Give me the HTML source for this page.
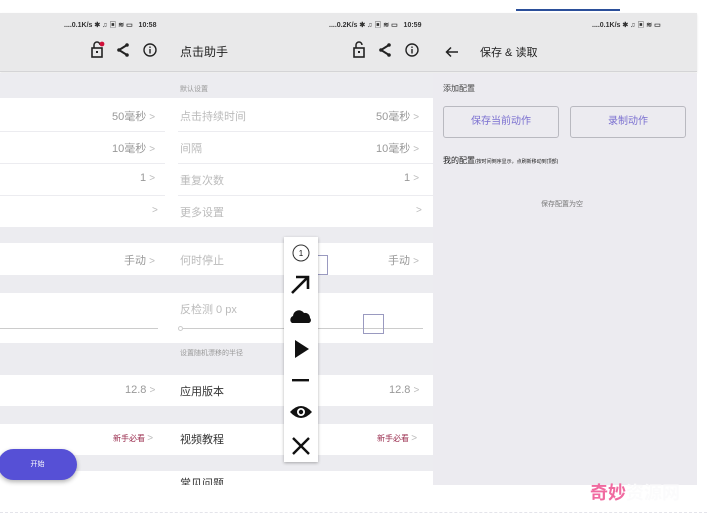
<!DOCTYPE html>
<html><head><meta charset="utf-8"><style>
*{margin:0;padding:0;box-sizing:border-box}
body{width:707px;height:519px;overflow:hidden;background:#fff;position:relative;font-family:"Liberation Sans","Noto Sans CJK SC",sans-serif;}
.a{position:absolute;white-space:nowrap}
.hdr{position:absolute;left:0;top:13px;width:697px;height:59px;background:#e9e9ea;border-bottom:1px solid #d4d4d6;box-shadow:0 1px 2px rgba(0,0,0,.1)}
.sb{font-size:7px;font-weight:bold;color:#333}
.t{font-size:11px;color:#bbb}
.v{font-size:11px;color:#999}
.line{position:absolute;height:1px;background:#ececf0}
.gray{position:absolute;background:#ececf0}
.chev{font-size:10px;color:#bbb}
</style></head><body>
<div class="a" style="left:516px;top:9px;width:104px;height:2px;background:#2b4f9a"></div>
<div class="hdr"></div>
<div class="a sb" style="left:64px;top:20px">....0.1K/s ✱ ♫ ▣ ≋ ▭ &nbsp; 10:58</div>
<div class="a sb" style="left:329px;top:20px">....0.2K/s ✱ ♫ ▣ ≋ ▭ &nbsp; 10:59</div>
<div class="a sb" style="left:592px;top:20px">....0.1K/s ✱ ♫ ▣ ≋ ▭</div>
<svg class="a" style="left:90px;top:41px" width="70" height="18" viewBox="0 0 70 18">
<rect x="2" y="7" width="10" height="9" fill="none" stroke="#222" stroke-width="1.6"/><path d="M4 7V4a3 3 0 0 1 6 0" fill="none" stroke="#222" stroke-width="1.5"/><rect x="6" y="10" width="2" height="2" fill="#222"/><circle cx="12" cy="3" r="2.4" fill="#d0103a"/>
<path d="M37 4L29 9L37 14" fill="none" stroke="#222" stroke-width="2"/><circle cx="37" cy="4" r="1.8" fill="#222"/><circle cx="29" cy="9" r="1.8" fill="#222"/><circle cx="37" cy="14" r="1.8" fill="#222"/>
<circle cx="60" cy="9" r="6" fill="none" stroke="#222" stroke-width="1.4"/><rect x="59.3" y="8" width="1.4" height="4.5" fill="#222"/><rect x="59.3" y="5.5" width="1.4" height="1.4" fill="#222"/>
</svg>
<div class="a" style="left:180px;top:43px;font-size:12px;color:#222">点击助手</div>
<svg class="a" style="left:352px;top:41px" width="70" height="18" viewBox="0 0 70 18">
<rect x="2" y="7" width="10" height="9" fill="none" stroke="#222" stroke-width="1.6"/><path d="M4 7V4a3 3 0 0 1 6 0" fill="none" stroke="#222" stroke-width="1.5"/><rect x="6" y="10" width="2" height="2" fill="#222"/>
<path d="M37 4L29 9L37 14" fill="none" stroke="#222" stroke-width="2"/><circle cx="37" cy="4" r="1.8" fill="#222"/><circle cx="29" cy="9" r="1.8" fill="#222"/><circle cx="37" cy="14" r="1.8" fill="#222"/>
<circle cx="60" cy="9" r="6" fill="none" stroke="#222" stroke-width="1.4"/><rect x="59.3" y="8" width="1.4" height="4.5" fill="#222"/><rect x="59.3" y="5.5" width="1.4" height="1.4" fill="#222"/>
</svg>
<svg class="a" style="left:445px;top:46px" width="14" height="12" viewBox="0 0 14 12"><path d="M13 6H2M6 1.5L1.5 6L6 10.5" fill="none" stroke="#222" stroke-width="1.5"/></svg>
<div class="a" style="left:480px;top:44px;font-size:11px;color:#222">保存 &amp; 读取</div>

<div class="gray" style="left:0;top:73px;width:433px;height:412px"></div>
<div class="gray" style="left:433px;top:73px;width:264px;height:412px;background:#ecebf0"></div>
<div class="a" style="left:0;top:98px;width:433px;height:129px;background:#fff"></div>
<div class="a" style="left:0;top:243px;width:433px;height:32px;background:#fff"></div>
<div class="a" style="left:0;top:293px;width:433px;height:50px;background:#fff"></div>
<div class="a" style="left:0;top:375px;width:433px;height:31px;background:#fff"></div>
<div class="a" style="left:0;top:424px;width:433px;height:31px;background:#fff"></div>
<div class="a" style="left:0;top:471px;width:433px;height:14px;background:#fff;overflow:hidden"><div class="a" style="left:180px;top:4px;font-size:11px;color:#333">常见问题</div></div>
<div class="line" style="left:0;top:131px;width:165px"></div><div class="line" style="left:178px;top:131px;width:255px"></div>
<div class="line" style="left:0;top:163px;width:165px"></div><div class="line" style="left:178px;top:163px;width:255px"></div>
<div class="line" style="left:0;top:195px;width:165px"></div><div class="line" style="left:178px;top:195px;width:255px"></div>
<div class="a" style="left:180px;top:84px;font-size:7px;color:#999">默认设置</div>
<div class="a v" style="left:112px;top:108px">50毫秒 <span class="chev">&gt;</span></div>
<div class="a t" style="left:180px;top:108px">点击持续时间</div>
<div class="a v" style="left:376px;top:108px">50毫秒 <span class="chev">&gt;</span></div>
<div class="a v" style="left:112px;top:140px">10毫秒 <span class="chev">&gt;</span></div>
<div class="a t" style="left:180px;top:140px">间隔</div>
<div class="a v" style="left:376px;top:140px">10毫秒 <span class="chev">&gt;</span></div>
<div class="a v" style="left:140px;top:172px">1 <span class="chev">&gt;</span></div>
<div class="a t" style="left:180px;top:172px">重复次数</div>
<div class="a v" style="left:404px;top:172px">1 <span class="chev">&gt;</span></div>
<div class="a chev" style="left:152px;top:205px">&gt;</div>
<div class="a t" style="left:180px;top:204px">更多设置</div>
<div class="a chev" style="left:416px;top:205px">&gt;</div>
<div class="a v" style="left:124px;top:252px">手动 <span class="chev">&gt;</span></div>
<div class="a t" style="left:180px;top:252px">何时停止</div>
<div class="a v" style="left:388px;top:252px">手动 <span class="chev">&gt;</span></div>
<div class="a t" style="left:180px;top:301px">反检测 0 px</div>
<div class="line" style="left:0;top:328px;width:158px;background:#ccc"></div>
<div class="line" style="left:183px;top:328px;width:240px;background:#ccc"></div>
<div class="a" style="left:178px;top:326px;width:5px;height:5px;border:1px solid #ccc;border-radius:50%;background:#fff"></div>
<div class="a" style="left:180px;top:348px;font-size:7px;color:#999">设置随机漂移的半径</div>
<div class="a v" style="left:125px;top:384px">12.8 <span class="chev">&gt;</span></div>
<div class="a" style="left:180px;top:383px;font-size:11px;color:#333">应用版本</div>
<div class="a v" style="left:389px;top:384px">12.8 <span class="chev">&gt;</span></div>
<div class="a" style="left:113px;top:433px;font-size:8px;color:#9a2c4e">新手必看 <span class="chev" style="font-size:10px">&gt;</span></div>
<div class="a" style="left:180px;top:431px;font-size:11px;color:#333">视频教程</div>
<div class="a" style="left:377px;top:433px;font-size:8px;color:#9a2c4e">新手必看 <span class="chev" style="font-size:10px">&gt;</span></div>
<div class="a" style="left:-2px;top:449px;width:79px;height:31px;border-radius:16px;background:#5650d6;box-shadow:0 2px 5px rgba(0,0,0,.3);color:#fff;font-size:7px;text-align:center;line-height:31px">开始</div>
<div class="a" style="left:307px;top:255px;width:21px;height:20px;border:1px solid #9a9ac0"></div>
<div class="a" style="left:363px;top:314px;width:21px;height:20px;border:1px solid #9a9ac0"></div>
<div class="a" style="left:284px;top:237px;width:34px;height:225px;background:#fff;box-shadow:0 1px 3px rgba(0,0,0,.3)"></div>
<svg class="a" style="left:284px;top:237px" width="34" height="225" viewBox="0 0 34 225">
<circle cx="17" cy="16" r="8" fill="#fff" stroke="#333" stroke-width="1"/><text x="17" y="19" font-size="8" text-anchor="middle" font-family="Liberation Sans" fill="#111">1</text>
<path d="M8 56L23 41M12 40H24V52" fill="none" stroke="#111" stroke-width="2.6"/>
<path d="M8 86a4 4 0 0 1 1-7a6 6 0 0 1 11-3a5 5 0 0 1 6 5a3 3 0 0 1-1 5z" fill="#111"/>
<path d="M11 103L25 112L11 121z" fill="#111"/>
<rect x="8" y="142" width="17" height="2.4" fill="#111"/>
<path d="M6 175q11-12 22 0q-11 12-22 0z" fill="#111"/><circle cx="17" cy="175" r="4" fill="#fff"/><circle cx="17" cy="175" r="2.2" fill="#111"/>
<path d="M9 201L25 217M25 201L9 217" stroke="#111" stroke-width="2.4"/>
</svg>
<div class="a" style="left:443px;top:83px;font-size:8px;color:#444">添加配置</div>
<div class="a" style="left:443px;top:106px;width:116px;height:32px;border:1px solid #b9b9c0;border-radius:3px;color:#7a6fd0;font-size:10px;text-align:center;line-height:30px">保存当前动作</div>
<div class="a" style="left:570px;top:106px;width:116px;height:32px;border:1px solid #b9b9c0;border-radius:3px;color:#7a6fd0;font-size:10px;text-align:center;line-height:30px">录制动作</div>
<div class="a" style="left:443px;top:155px;font-size:8px;color:#222">我的配置<span style="font-size:5px">(按时间倒序显示，点刷新移动到顶部)</span></div>
<div class="a" style="left:541px;top:199px;font-size:7px;color:#777">保存配置为空</div>
<div class="a" style="left:590px;top:479px;font-size:18px;color:#f06aa0;font-weight:bold">奇妙<span style="color:#fbfbfc">资源网</span></div>
<div class="a" style="left:0;top:512px;width:707px;border-top:1px dashed #e4e4ea"></div>
</body></html>
